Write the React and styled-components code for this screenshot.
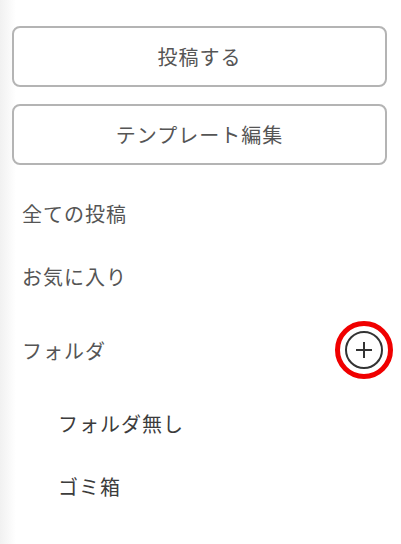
import React from "react";
import styled, { createGlobalStyle } from "styled-components";

const GlobalStyle = createGlobalStyle`
  html, body {
    margin: 0;
    padding: 0;
    background: #fff;
  }

  body {
    font-family: "Noto Sans CJK JP", "Noto Sans", sans-serif;
  }
`;

const Sidebar = styled.div`
  width: 401px;
  height: 544px;
  padding: 26px 14px 0 12px;
  box-sizing: border-box;
  background: linear-gradient(
    to right,
    #f1f1f1 0,
    #f8f8f8 8px,
    #ffffff 16px
  );

  display: flex;
  flex-direction: column;
`;

const ButtonGroup = styled.div`
  display: flex;
  flex-direction: column;
  gap: 17px;
`;

const ActionButton = styled.button`
  width: 100%;
  height: 61px;
  background-color: #fff;
  border: 2px solid #b4b4b4;
  border-radius: 8px;

  color: #555;
  font-family: inherit;
  font-size: 20px;
  letter-spacing: 1px;

  cursor: pointer;
`;

const Menu = styled.ul`
  margin: 17px 0 0;
  padding: 0;
  list-style: none;
`;

const MenuItem = styled.li`
  height: ${(props) => (props.$tall ? "84px" : "63px")};
  padding-left: ${(props) => (props.$sub ? "46px" : "10px")};

  display: flex;
  align-items: center;
  justify-content: space-between;

  color: ${(props) => (props.$sub ? "#3c3c3c" : "#555")};
  font-size: 20px;
  letter-spacing: 1px;
`;

const AddButton = styled.span`
  position: relative;
  width: 40px;
  height: 40px;
  margin-right: 3px;

  display: flex;
  align-items: center;
  justify-content: center;

  &::after {
    content: "";
    position: absolute;
    inset: -9px;
    border: 5px solid #f00000;
    border-radius: 50%;
  }
`;

function PlusCircle() {
  return (
    <svg width="40" height="40" viewBox="0 0 40 40">
      <circle cx="20" cy="20" r="18" fill="none" stroke="#333" strokeWidth="2" />
      <line x1="12" y1="20" x2="28" y2="20" stroke="#333" strokeWidth="2" />
      <line x1="20" y1="12" x2="20" y2="28" stroke="#333" strokeWidth="2" />
    </svg>
  );
}

export default function App() {
  return (
    <>
      <GlobalStyle />
      <Sidebar>
        <ButtonGroup>
          <ActionButton>投稿する</ActionButton>
          <ActionButton>テンプレート編集</ActionButton>
        </ButtonGroup>

        <Menu>
          <MenuItem>全ての投稿</MenuItem>
          <MenuItem>お気に入り</MenuItem>
          <MenuItem $tall>
            フォルダ
            <AddButton>
              <PlusCircle />
            </AddButton>
          </MenuItem>
          <MenuItem $sub>フォルダ無し</MenuItem>
          <MenuItem $sub>ゴミ箱</MenuItem>
        </Menu>
      </Sidebar>
    </>
  );
}
